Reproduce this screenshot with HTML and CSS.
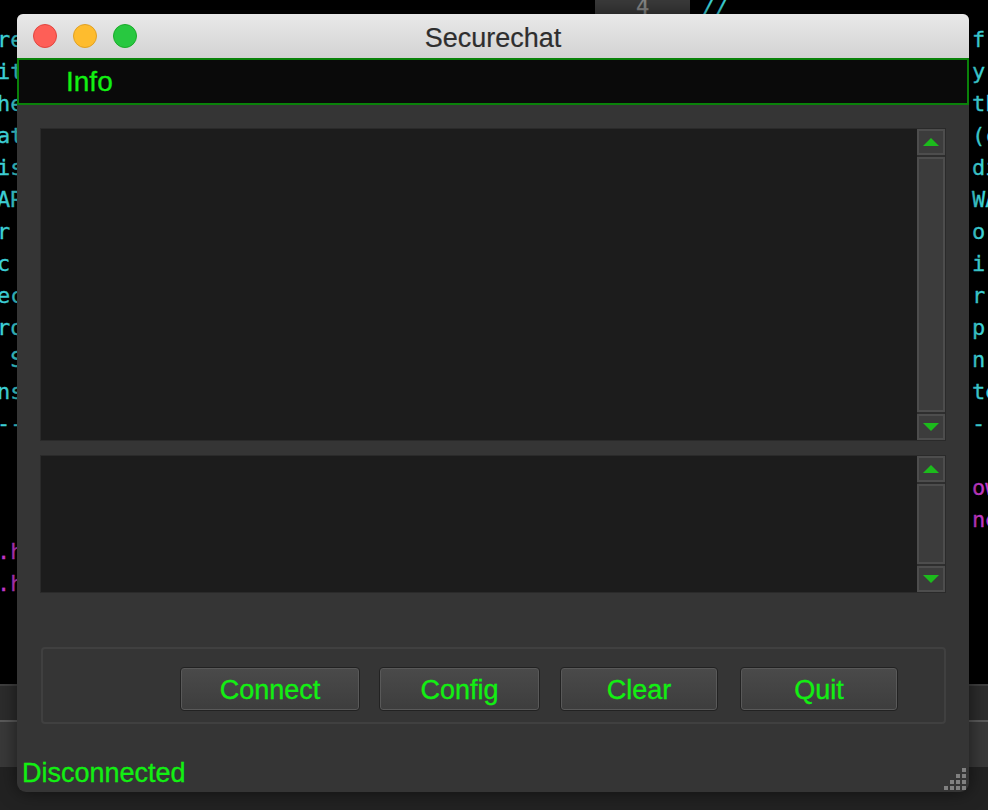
FILE: index.html
```html
<!DOCTYPE html>
<html>
<head>
<meta charset="utf-8">
<title>Securechat</title>
<link rel="stylesheet" href="styles.css">
</head>
<body>
<div class="desktop">
  <div class="term">
    <div class="tline top"><span class="l"></span><span class="tab">4</span><span class="slash">//</span></div>
    <div class="tline"><span class="l">rea</span><span class="r">f</span></div>
    <div class="tline"><span class="l">ith</span><span class="r">y '</span></div>
    <div class="tline"><span class="l">hei</span><span class="r">th</span></div>
    <div class="tline"><span class="l">ate</span><span class="r">(c</span></div>
    <div class="tline"><span class="l">is </span><span class="r">di</span></div>
    <div class="tline"><span class="l">ARR</span><span class="r">WA</span></div>
    <div class="tline"><span class="l">r  </span><span class="r">o</span></div>
    <div class="tline"><span class="l">c  </span><span class="r">i</span></div>
    <div class="tline"><span class="l">ect</span><span class="r">r</span></div>
    <div class="tline"><span class="l">roc</span><span class="r">p</span></div>
    <div class="tline"><span class="l"> So</span><span class="r">n</span></div>
    <div class="tline"><span class="l">nse</span><span class="r">te</span></div>
    <div class="tline"><span class="l">---</span><span class="r">-</span></div>
    <div class="tline"><span class="l"></span><span class="r"></span></div>
    <div class="tline"><span class="l"></span><span class="r mag">ow</span></div>
    <div class="tline"><span class="l"></span><span class="r mag">ne</span></div>
    <div class="tline"><span class="l mag">.hp</span><span class="r"></span></div>
    <div class="tline"><span class="l mag">.hp</span><span class="r"></span></div>
  </div>
  <div class="panel-a"></div>
  <div class="panel-b"></div>
  <div class="panel-c"></div>

  <div class="window">
    <div class="titlebar">
      <div class="lights">
        <span class="light red"></span>
        <span class="light yellow"></span>
        <span class="light green"></span>
      </div>
      <div class="title">Securechat</div>
    </div>
    <div class="info">Info</div>
    <div class="content">
      <div class="textarea big">
        <div class="text"></div>
        <div class="scrollbar">
          <div class="sbtn"><span class="arrow up"></span></div>
          <div class="track"></div>
          <div class="sbtn"><span class="arrow down"></span></div>
        </div>
      </div>
      <div class="textarea small">
        <div class="text"></div>
        <div class="scrollbar">
          <div class="sbtn"><span class="arrow up"></span></div>
          <div class="track"></div>
          <div class="sbtn"><span class="arrow down"></span></div>
        </div>
      </div>
      <div class="group">
        <button class="btn b-connect">Connect</button>
        <button class="btn b-config">Config</button>
        <button class="btn b-clear">Clear</button>
        <button class="btn b-quit">Quit</button>
      </div>
      <div class="status">Disconnected</div>
    </div>
    <div class="grip">
      <svg width="22" height="22" viewBox="0 0 22 22">
        <g fill="#808080">
          <rect x="18" y="0" width="4" height="4"/>
          <rect x="12" y="6" width="4" height="4"/><rect x="18" y="6" width="4" height="4"/>
          <rect x="6" y="12" width="4" height="4"/><rect x="12" y="12" width="4" height="4"/><rect x="18" y="12" width="4" height="4"/>
          <rect x="0" y="18" width="4" height="4"/><rect x="6" y="18" width="4" height="4"/><rect x="12" y="18" width="4" height="4"/><rect x="18" y="18" width="4" height="4"/>
        </g>
      </svg>
    </div>
  </div>
</div>
</body>
</html>
```

FILE: styles.css
```css
* { box-sizing: border-box; }
html, body { margin: 0; padding: 0; }
body {
  width: 988px;
  height: 810px;
  overflow: hidden;
  background: #000;
  font-family: "Liberation Sans", Arial, sans-serif;
}
.desktop {
  position: relative;
  width: 988px;
  height: 810px;
  overflow: hidden;
}
.term {
  margin-top: -8px;
  height: 692px;
  font-family: "DejaVu Sans Mono", monospace;
  font-size: 22px;
  line-height: 32px;
  color: #3fd6dc;
  -webkit-text-stroke: 0.3px currentColor;
}
.tline {
  display: flex;
  height: 32px;
  white-space: pre;
}
.tline .l {
  width: 975px;
  margin-left: -3px;
  flex: none;
}
.tline .r { flex: none; }
.mag { color: #c63acb; }
.tline.top .l { width: 598px; }
.tab {
  display: block;
  width: 95px;
  height: 22px;
  background: #3a3a3a;
  color: #888;
  text-align: center;
  line-height: 30px;
  flex: none;
}
.slash {
  margin-left: 12px;
  font-style: italic;
  color: #3fd6dc;
}
.panel-a {
  height: 36px;
  background: #2c2c2c;
  border-top: 2px solid #3e3e3e;
}
.panel-b {
  height: 47px;
  background: #393939;
  border-top: 2px solid #5a5a5a;
}
.panel-c {
  height: 60px;
  background: #222;
}

.window {
  position: absolute;
  left: 17px;
  top: 14px;
  width: 952px;
  height: 778px;
  border-radius: 6px 6px 9px 9px;
  overflow: hidden;
  background: #353535;
  box-shadow: 0 0 18px rgba(0,0,0,0.55);
  display: flex;
  flex-direction: column;
}
.titlebar {
  position: relative;
  height: 44px;
  flex: none;
  background: linear-gradient(#e9e9e9, #d3d3d3);
  display: flex;
  align-items: center;
  justify-content: center;
}
.lights {
  position: absolute;
  left: 16px;
  top: 10px;
  display: flex;
  gap: 16px;
}
.light {
  display: block;
  width: 24px;
  height: 24px;
  border-radius: 50%;
}
.red { background: #fe5f57; border: 1px solid #e1453f; }
.yellow { background: #febc2e; border: 1px solid #e0a124; }
.green { background: #28c840; border: 1px solid #1bab2a; }
.title {
  font-size: 27px;
  color: #2e2e2e;
  padding-top: 4px;
  -webkit-text-stroke: 0.2px currentColor;
}
.info {
  height: 47px;
  flex: none;
  background: #0a0a0a;
  border: 2px solid #0a820a;
  color: #12f012;
  font-size: 28px;
  line-height: 44px;
  padding-left: 47px;
  -webkit-text-stroke: 0.3px currentColor;
}
.content {
  flex: 1;
  display: flex;
  flex-direction: column;
  padding: 23px 23px 0 23px;
}
.textarea {
  display: flex;
  border: 1px solid #2a2a2a;
  background: #1c1c1c;
  flex: none;
}
.textarea.big { height: 313px; }
.textarea.small { height: 138px; margin-top: 14px; }
.text { flex: 1; }
.scrollbar {
  width: 28px;
  flex: none;
  display: flex;
  flex-direction: column;
  gap: 2px;
  background: #2e2e2e;
}
.sbtn, .track {
  border: 2px solid #4d4d4d;
  background: #3c3c3c;
}
.sbtn {
  height: 26px;
  flex: none;
  display: flex;
  align-items: center;
  justify-content: center;
}
.track { flex: 1; }
.arrow {
  width: 0;
  height: 0;
  border-left: 8px solid transparent;
  border-right: 8px solid transparent;
}
.arrow.up { border-bottom: 8px solid #1cbb1c; }
.arrow.down { border-top: 8px solid #1cbb1c; }

.group {
  margin-top: 54px;
  margin-left: 1px;
  height: 77px;
  border: 2px solid #404040;
  border-radius: 4px;
  display: flex;
  align-items: flex-start;
  padding-top: 18px;
  padding-left: 137px;
}
.btn {
  height: 44px;
  border: 1px solid #222;
  border-radius: 4px;
  background: linear-gradient(#4a4a4a, #3d3d3d);
  box-shadow: inset 0 0 0 1px #595959;
  color: #12f012;
  font-family: "Liberation Sans", Arial, sans-serif;
  font-size: 27px;
  padding: 2px 0 0 0;
  line-height: 40px;
  -webkit-text-stroke: 0.3px currentColor;
}
.b-connect { width: 180px; }
.b-config { width: 161px; margin-left: 19px; }
.b-clear { width: 158px; margin-left: 20px; }
.b-quit { width: 158px; margin-left: 22px; }
.status {
  margin-top: 33px;
  margin-left: -18px;
  color: #12f012;
  font-size: 27px;
  line-height: 32px;
  -webkit-text-stroke: 0.3px currentColor;
}
.grip {
  position: absolute;
  right: 3px;
  bottom: 2px;
  width: 22px;
  height: 22px;
}
.grip svg { display: block; }
```
